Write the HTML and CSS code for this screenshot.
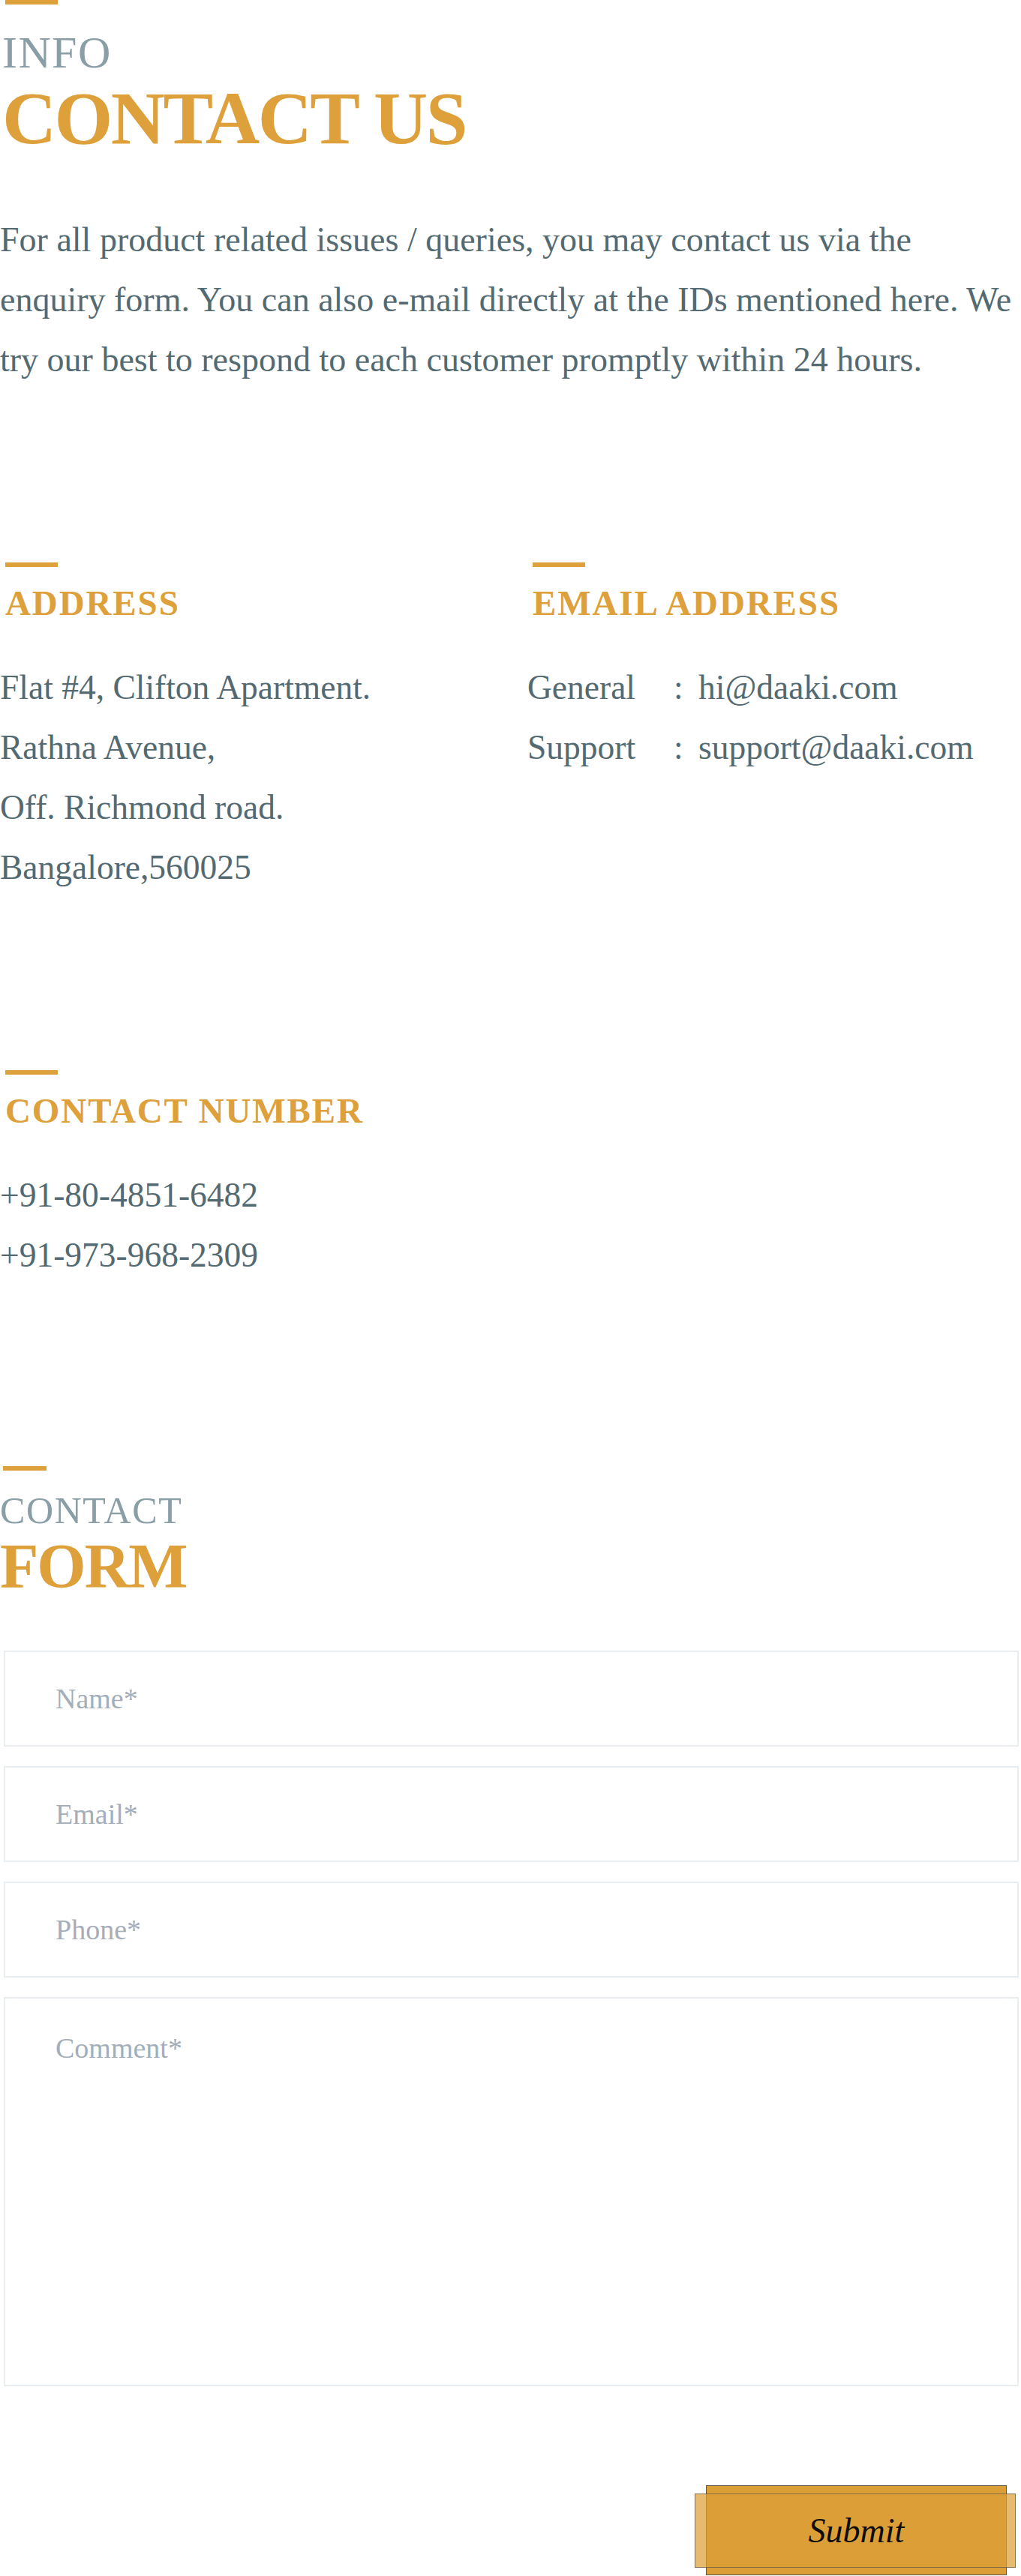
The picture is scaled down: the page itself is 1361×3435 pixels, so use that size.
FILE: index.html
```html
<!DOCTYPE html>
<html lang="en">
<head>
<meta charset="utf-8">
<title>Contact Us</title>
<link rel="stylesheet" href="styles.css">
</head>
<body>
<main class="page">
  <section class="intro">
    <span class="bar"></span>
    <p class="eyebrow">INFO</p>
    <h1 class="title">CONTACT US</h1>
    <p class="lead">For all product related issues / queries, you may contact us via the enquiry form. You can also e-mail directly at the IDs mentioned here. We try our best to respond to each customer promptly within 24 hours.</p>
  </section>

  <section class="info-grid">
    <div class="info-block">
      <span class="bar"></span>
      <h2 class="label">ADDRESS</h2>
      <div class="lines">
        <p>Flat #4, Clifton Apartment.</p>
        <p>Rathna Avenue,</p>
        <p>Off. Richmond road.</p>
        <p>Bangalore,560025</p>
      </div>
    </div>
    <div class="info-block">
      <span class="bar"></span>
      <h2 class="label">EMAIL ADDRESS</h2>
      <div class="lines mail-table">
        <span>General</span><span>:</span><span>hi@daaki.com</span>
        <span>Support</span><span>:</span><span>support@daaki.com</span>
      </div>
    </div>
  </section>

  <section class="info-block phone">
    <span class="bar"></span>
    <h2 class="label">CONTACT NUMBER</h2>
    <div class="lines">
      <p>+91-80-4851-6482</p>
      <p>+91-973-968-2309</p>
    </div>
  </section>

  <section class="form-section">
    <span class="bar bar-sm"></span>
    <p class="eyebrow eyebrow-sm">CONTACT</p>
    <h2 class="title title-sm">FORM</h2>
    <form class="contact-form">
      <input class="field" type="text" placeholder="Name*">
      <input class="field" type="email" placeholder="Email*">
      <input class="field" type="tel" placeholder="Phone*">
      <textarea class="field field-area" placeholder="Comment*"></textarea>
      <div class="actions">
        <button class="submit" type="button"><span class="submit-text">Submit</span></button>
      </div>
    </form>
  </section>
</main>
</body>
</html>
```

FILE: styles.css
```css
* { box-sizing: border-box; }

html, body {
  margin: 0;
  padding: 0;
  background: #ffffff;
}

body {
  font-family: "Liberation Serif", "Times New Roman", serif;
  color: #536a72;
}

.page {
  width: 1361px;
  height: 3435px;
  overflow: hidden;
}

p, h1, h2 { margin: 0; font-weight: normal; }

.bar {
  display: block;
  width: 70px;
  height: 6px;
  margin-left: 7px;
  background: #dda03a;
}

.eyebrow {
  margin-top: 34px;
  padding-left: 3px;
  font-size: 60px;
  line-height: 60px;
  letter-spacing: 1.4px;
  color: #8a9ea6;
}

.title {
  margin-top: 8px;
  padding-left: 3px;
  font-size: 100px;
  line-height: 100px;
  font-weight: bold;
  letter-spacing: -2.6px;
  color: #dda03a;
}

.lead {
  margin-top: 72px;
  font-size: 46px;
  line-height: 80px;
  color: #536a72;
}

.info-grid {
  margin-top: 230px;
  display: grid;
  grid-template-columns: 703px 1fr;
  align-items: start;
}

.label {
  margin-top: 25px;
  padding-left: 7px;
  font-size: 47px;
  line-height: 46px;
  font-weight: bold;
  letter-spacing: 1.9px;
  color: #dda03a;
}

.lines {
  margin-top: 50px;
  font-size: 45.5px;
  line-height: 80px;
  color: #536a72;
}

.mail-table {
  display: grid;
  grid-template-columns: 195px 33px auto;
}

.phone {
  margin-top: 230px;
}

.form-section {
  margin-top: 241px;
}

.bar-sm {
  width: 58px;
  margin-left: 4px;
}

.eyebrow-sm {
  margin-top: 28px;
  padding-left: 0;
  font-size: 50px;
  line-height: 50px;
  letter-spacing: 1.6px;
}

.title-sm {
  margin-top: 8px;
  padding-left: 0;
  font-size: 84px;
  line-height: 84px;
  letter-spacing: -2px;
}

.contact-form {
  margin-top: 70px;
  padding-left: 5px;
  padding-right: 3px;
  display: flex;
  flex-direction: column;
  gap: 26px;
}

.field {
  display: block;
  width: 100%;
  height: 128px;
  margin: 0;
  padding: 0 67px;
  border: 2px solid #e8eef1;
  border-radius: 0;
  background: #ffffff;
  font-family: "Liberation Serif", "Times New Roman", serif;
  font-size: 38px;
  color: #536a72;
  outline: none;
}

.field::placeholder {
  color: #a4aeb9;
  opacity: 1;
}

.field-area {
  height: 519px;
  padding-top: 44px;
  resize: none;
}

.actions {
  display: flex;
  justify-content: flex-end;
  margin-top: 106px;
  padding-right: 16px;
}

.submit {
  position: relative;
  width: 401px;
  height: 120px;
  margin: 0;
  padding: 0;
  border: 1.5px solid #5c5447;
  background: #dc9f37;
  font-family: "Liberation Serif", "Times New Roman", serif;
  font-style: italic;
  font-size: 46px;
  color: #0d0d0d;
  cursor: pointer;
}

.submit::before {
  content: "";
  position: absolute;
  top: 10px;
  bottom: 9px;
  left: -16px;
  right: -13px;
  border: 1.5px solid rgba(70, 70, 70, 0.6);
  background: rgba(221, 160, 56, 0.72);
}

.submit-text {
  position: relative;
  z-index: 1;
}
```
